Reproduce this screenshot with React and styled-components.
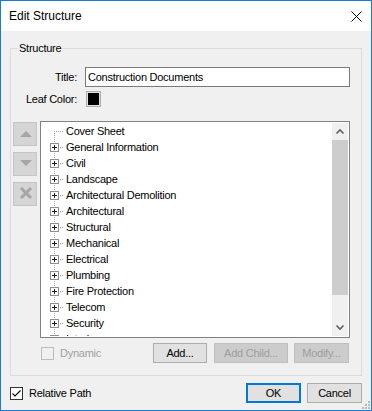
import React from 'react';
import styled, { createGlobalStyle, css } from 'styled-components';

const Global = createGlobalStyle`
  html, body { margin: 0; padding: 0; background: #ffffff; }
  * { box-sizing: border-box; }
`;

const Window = styled.div`
  position: relative;
  width: 372px;
  height: 411px;
  border: 1px solid #1b7ad3;
  background: #f0f0f0;
  display: flex;
  flex-direction: column;
  font-family: "Liberation Sans", Arial, sans-serif;
  font-size: 11px;
  letter-spacing: -0.25px;
  color: #000;
`;

const TitleBar = styled.div`
  height: 30px;
  flex: none;
  background: #ffffff;
  display: flex;
  align-items: center;
  justify-content: space-between;
  padding: 0 9px 0 8px;
  font-size: 12px;
  letter-spacing: 0;
`;

const Body = styled.div`
  flex: 1;
  display: flex;
  flex-direction: column;
  padding: 10px 9px 7px 9px;
`;

const Group = styled.fieldset`
  margin: 0;
  padding: 12px 11px 12px 0;
  min-width: 0;
  border: 1px solid #dcdcdc;
`;

const Legend = styled.legend`
  margin-left: 7px;
  padding: 0 1px;
  line-height: 14px;
  font-size: 11px;
`;

const Form = styled.div`
  display: grid;
  grid-template-columns: 66px 1fr;
  grid-template-rows: 20px 16px;
  column-gap: 8px;
  row-gap: 4px;
  align-items: center;
`;

const Label = styled.label`
  text-align: right;
  white-space: nowrap;
`;

const TextInput = styled.input`
  height: 20px;
  width: 100%;
  border: 1px solid #7a7a7a;
  background: #fff;
  padding: 0 2px;
  margin: 0;
  font: inherit;
  letter-spacing: inherit;
  color: #000;
  outline: none;
`;

const Swatch = styled.div`
  width: 15px;
  height: 16px;
  margin-left: 1px;
  border: 1px solid #adadad;
  background: #e1e1e1;
  display: flex;
  align-items: center;
  justify-content: center;
  &::after {
    content: '';
    width: 11px;
    height: 12px;
    background: ${p => p.$color};
  }
`;

const TreeArea = styled.div`
  display: flex;
  gap: 3px;
  margin-top: 14px;
  padding-left: 2px;
  height: 217px;
`;

const SideButtons = styled.div`
  display: flex;
  flex-direction: column;
  gap: 6px;
  padding-top: 1px;
`;

const SideButton = styled.div`
  width: 24px;
  height: 24px;
  background: #d5d5d5;
  border: 1px solid #c6c6c6;
  display: flex;
  align-items: center;
  justify-content: center;
`;

const Tree = styled.div`
  flex: 1;
  border: 1px solid #828282;
  background: #fff;
  padding: 1px;
  display: flex;
  overflow: hidden;
`;

const TreeList = styled.div`
  flex: 1;
  overflow: hidden;
`;

const TreeRow = styled.div`
  height: 16px;
  display: flex;
  align-items: center;
  white-space: nowrap;
  svg { flex: none; }
`;

const ScrollBar = styled.div`
  width: 16px;
  flex: none;
  display: flex;
  flex-direction: column;
  background: #f0f0f0;
`;

const ScrollBtn = styled.div`
  height: 17px;
  flex: none;
  display: flex;
  align-items: center;
  justify-content: center;
`;

const Thumb = styled.div`
  height: 155px;
  flex: none;
  background: #cdcdcd;
`;

const Track = styled.div`
  flex: 1;
`;

const ActionRow = styled.div`
  display: flex;
  align-items: center;
  height: 20px;
  margin-top: 5px;
  padding-left: 30px;
  padding-right: 1px;
`;

const CheckBox = styled.span`
  width: 13px;
  height: 13px;
  flex: none;
  display: inline-flex;
  align-items: center;
  justify-content: center;
  border: 1px solid ${p => (p.$disabled ? '#bcbcbc' : '#333333')};
  background: ${p => (p.$disabled ? '#f0f0f0' : '#ffffff')};
`;

const CheckLabel = styled.span`
  margin-left: 6px;
  color: ${p => (p.$disabled ? '#a0a0a0' : '#000')};
`;

const Spacer = styled.div`
  flex: 1;
`;

const Button = styled.button`
  height: 20px;
  width: ${p => p.$w}px;
  margin: 0 0 0 ${p => p.$gap || 0}px;
  padding: 0;
  border: 1px solid #adadad;
  background: #e1e1e1;
  font: inherit;
  letter-spacing: inherit;
  color: #000;
  ${p => p.$disabled && css`
    background: #cccccc;
    border-color: #bfbfbf;
    color: #9d9d9d;
  `}
  ${p => p.$primary && css`
    border: 2px solid #0078d7;
  `}
`;

const Footer = styled.div`
  display: flex;
  align-items: center;
  height: 20px;
  margin-top: 7px;
  padding-left: 0;
`;

const Grip = styled.svg`
  position: absolute;
  right: 1px;
  bottom: 1px;
`;

const items = [
  'General Information',
  'Civil',
  'Landscape',
  'Architectural Demolition',
  'Architectural',
  'Structural',
  'Mechanical',
  'Electrical',
  'Plumbing',
  'Fire Protection',
  'Telecom',
  'Security',
  'Interiors',
];

const DOT = '#a0a0a0';

function Connector({ leaf }) {
  return (
    <svg width="24" height="16" shapeRendering="crispEdges">
      <line x1="12.5" y1={leaf ? 8 : 0} x2="12.5" y2="16" stroke={DOT} strokeDasharray="1 1" />
      {leaf ? (
        <line x1="12" y1="8.5" x2="22" y2="8.5" stroke={DOT} strokeDasharray="1 1" />
      ) : (
        <>
          <line x1="18" y1="8.5" x2="22" y2="8.5" stroke={DOT} strokeDasharray="1 1" />
          <rect x="8.5" y="4.5" width="8" height="8" fill="#fff" stroke="#8f8f8f" />
          <rect x="10" y="8" width="5" height="1" fill="#1b1b40" />
          <rect x="12" y="6" width="1" height="5" fill="#1b1b40" />
        </>
      )}
    </svg>
  );
}

export default function App() {
  return (
    <>
      <Global />
      <Window>
        <TitleBar>
          <span>Edit Structure</span>
          <svg width="11" height="11">
            <path d="M0.5 0.5 L10.5 10.5 M10.5 0.5 L0.5 10.5" stroke="#000" strokeWidth="1" />
          </svg>
        </TitleBar>
        <Body>
          <Group>
            <Legend>Structure</Legend>
            <Form>
              <Label>Title:</Label>
              <TextInput readOnly defaultValue="Construction Documents" />
              <Label>Leaf Color:</Label>
              <Swatch $color="#000000" />
            </Form>
            <TreeArea>
              <SideButtons>
                <SideButton>
                  <svg width="24" height="24">
                    <polygon points="6,15 18,15 12,9" fill="#a6a6a6" />
                  </svg>
                </SideButton>
                <SideButton>
                  <svg width="24" height="24">
                    <polygon points="6,8 18,8 12,14" fill="#a6a6a6" />
                  </svg>
                </SideButton>
                <SideButton>
                  <svg width="24" height="24">
                    <path d="M7 6 L17 16 M17 6 L7 16" stroke="#a6a6a6" strokeWidth="3" />
                  </svg>
                </SideButton>
              </SideButtons>
              <Tree>
                <TreeList>
                  <TreeRow>
                    <Connector leaf />
                    <span>Cover Sheet</span>
                  </TreeRow>
                  {items.map(t => (
                    <TreeRow key={t}>
                      <Connector />
                      <span>{t}</span>
                    </TreeRow>
                  ))}
                </TreeList>
                <ScrollBar>
                  <ScrollBtn>
                    <svg width="16" height="17">
                      <path d="M4.5 10.5 L8 7 L11.5 10.5" stroke="#606060" strokeWidth="1.6" fill="none" />
                    </svg>
                  </ScrollBtn>
                  <Thumb />
                  <Track />
                  <ScrollBtn>
                    <svg width="16" height="17">
                      <path d="M4.5 6.5 L8 10 L11.5 6.5" stroke="#606060" strokeWidth="1.6" fill="none" />
                    </svg>
                  </ScrollBtn>
                </ScrollBar>
              </Tree>
            </TreeArea>
            <ActionRow>
              <CheckBox $disabled />
              <CheckLabel $disabled>Dynamic</CheckLabel>
              <Spacer />
              <Button $w={54}>Add...</Button>
              <Button $w={74} $gap={7} $disabled>Add Child...</Button>
              <Button $w={55} $gap={6} $disabled>Modify...</Button>
            </ActionRow>
          </Group>
          <Footer>
            <CheckBox>
              <svg width="11" height="11">
                <path d="M1.5 5.5 L4 8 L9.5 2.5" stroke="#000" strokeWidth="1.1" fill="none" />
              </svg>
            </CheckBox>
            <CheckLabel>Relative Path</CheckLabel>
            <Spacer />
            <Button $w={55} $primary>OK</Button>
            <Button $w={55} $gap={6}>Cancel</Button>
          </Footer>
        </Body>
        <Grip width="10" height="10">
          <rect x="8" y="2" width="2" height="2" fill="#b8b8b8" />
          <rect x="5" y="5" width="2" height="2" fill="#b8b8b8" />
          <rect x="8" y="5" width="2" height="2" fill="#b8b8b8" />
          <rect x="2" y="8" width="2" height="2" fill="#b8b8b8" />
          <rect x="5" y="8" width="2" height="2" fill="#b8b8b8" />
          <rect x="8" y="8" width="2" height="2" fill="#b8b8b8" />
        </Grip>
      </Window>
    </>
  );
}
